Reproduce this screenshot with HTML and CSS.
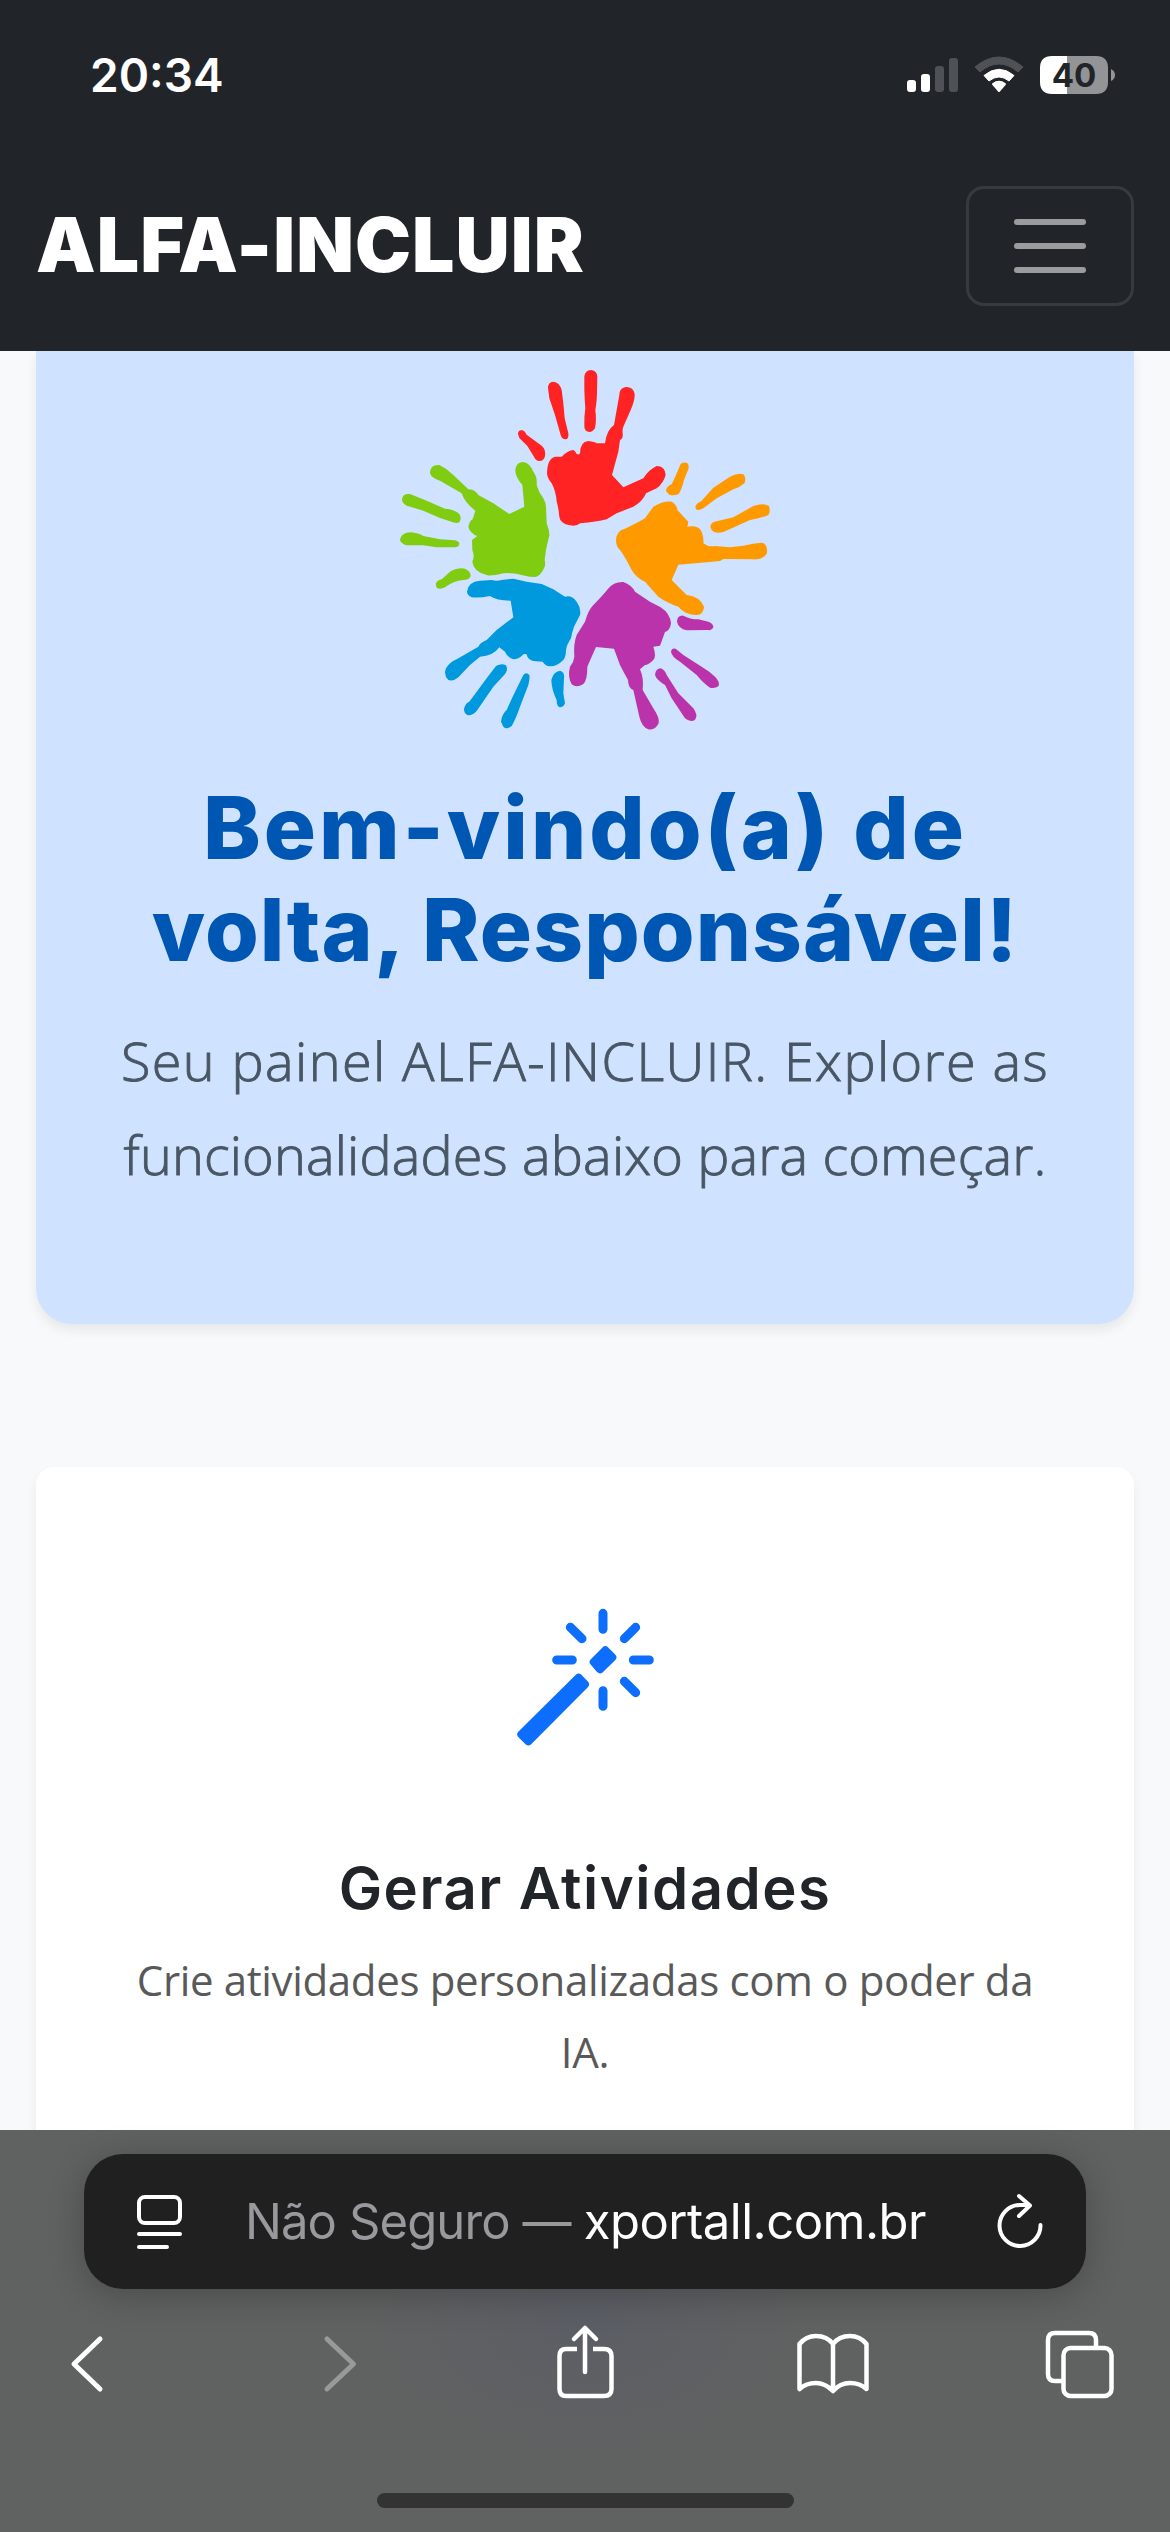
FILE: index.html
```html
<!DOCTYPE html>
<html lang="pt-BR">
<head>
<meta charset="utf-8">
<title>ALFA-INCLUIR</title>
<link rel="stylesheet" href="styles.css">
</head>
<body>
<div class="screen">
  <header class="top">
    <div class="status">
      <span class="time">20:34</span>
      <svg class="status-icons" width="212" height="44" viewBox="0 0 212 44">
        <rect x="1" y="27" width="9" height="12" rx="3" fill="#fff"/>
        <rect x="15" y="21" width="9" height="18" rx="3" fill="#fff"/>
        <rect x="29" y="13" width="9" height="26" rx="3" fill="#4e5156"/>
        <rect x="43" y="5" width="9" height="34" rx="3" fill="#4e5156"/>
        <path d="M69 14 Q93 -6 117 14 L112 19 Q93 3 74 19Z" fill="#4e5156" stroke="#4e5156" stroke-linejoin="round"/>
        <path d="M78 22.500 Q93 10 108 22.500 L103 28 Q93 20 83 28Z" fill="#fff" stroke="#fff" stroke-linejoin="round"/>
        <path d="M87 31 Q93 26.500 99 31 L93 38Z" fill="#fff" stroke="#fff" stroke-width="2" stroke-linejoin="round"/>
        <path d="M146 3H161V41H146Q134 41 134 29V15Q134 3 146 3Z" fill="#fff"/>
        <path d="M161 3H190Q202 3 202 15V29Q202 41 190 41H161Z" fill="#939495"/>
        <path d="M205 16Q209 18 209 22T205 28Z" fill="#939495"/>
        <text x="168" y="34" class="battery" text-anchor="middle">40</text>
      </svg>
    </div>
    <nav class="navbar">
      <a class="brand">ALFA-INCLUIR</a>
      <button class="toggler" aria-label="Menu"><i></i><i></i><i></i></button>
    </nav>
  </header>

  <main class="page">
    <section class="hero">
      <svg class="hands" width="390" height="380" viewBox="0 0 1170 1140">
        <g fill="#ff2323">
          <path d="M384 222Q384 208 398 211Q405 214 410 224L455 257Q468 268 465 288Q462 303 448 303Q438 303 432 290L412 258L388 234Z"/>
          <path d="M474 85Q474 65 490 65Q508 66 515 90L520 130L524 175L535 220Q537 238 526 238Q516 238 512 225L495 165L478 115Z"/>
          <path d="M583 50Q586 30 602 30Q620 30 622 50L621 100Q620 130 616 150Q620 180 615 205Q608 216 598 216Q584 214 583 200Q582 170 586 145Q584 120 583 90Z"/>
          <path d="M688 105Q688 84 707 81Q730 80 734 102Q735 120 722 150L700 200Q697 205 698 220Q700 235 690 240L685 275L666 345L700 382L760 355Q775 330 800 318Q825 318 827 345Q820 370 800 385L768 400Q758 425 730 440L680 460L650 478Q620 486 570 490Q560 500 540 496Q510 490 508 470Q505 440 500 425Q498 395 485 370Q472 355 471 340Q472 295 495 290Q510 290 515 290Q535 270 550 270Q555 272 560 282Q568 285 570 280Q570 245 595 243Q615 245 620 250L645 250Q650 210 672 195Q680 150 688 105Z"/>
        </g>
        <g fill="#80cc10">
          <path d="M120 340Q120 313 148 315Q170 325 190 345L235 388Q255 388 265 405L310 430L358 462L403 440L397 375Q375 350 376 328Q380 306 400 306Q420 310 430 335Q442 350 440 375Q445 395 460 415Q468 430 468 440L470 490Q478 510 478 525L468 570L464 600Q468 615 462 625Q450 650 435 651Q418 651 405 647Q370 637 340 640Q300 650 290 645Q250 635 247 605Q255 590 247 570L246 540L262 528Q240 520 235 500Q240 480 248 478L256 452Q225 430 215 400L150 362Q125 355 120 340Z"/>
          <path d="M36 418Q38 400 60 402L110 422L165 446Q195 448 208 462Q216 475 208 487Q200 492 180 484L150 474L100 452L50 437Q36 430 36 418Z"/>
          <path d="M30 538Q34 518 62 517Q85 519 100 528L150 538L195 541Q208 545 208 552Q206 562 195 562L140 562L100 556L50 556Q30 550 30 538Z"/>
          <path d="M137 672Q140 662 155 658L180 635Q205 622 225 626Q243 635 242 648Q238 660 220 660Q190 662 165 682Q150 690 140 683Z"/>
        </g>
        <g fill="#ff9900">
          <path d="M828 394Q828 380 845 373L858 345L872 312Q880 305 892 309Q898 315 896 325L882 360Q875 390 865 403Q850 408 838 404Z"/>
          <path d="M916 440Q918 430 935 422L970 383L1020 350Q1045 338 1060 343Q1070 355 1063 370Q1050 382 1030 388L980 415L940 445Q925 453 918 448Z"/>
          <path d="M961 500Q964 485 980 484L1030 472L1090 438Q1120 428 1137 438Q1142 455 1135 465Q1110 475 1080 480L1035 500L1000 516Q975 522 965 510Z"/>
          <path d="M678 540Q680 510 705 506Q740 490 765 475L790 440Q820 422 845 425Q862 435 862 450L895 485L892 500Q925 495 935 515Q942 535 940 550Q955 562 975 558L1020 562L1060 557Q1090 550 1115 548Q1130 550 1131 570L1131 580Q1120 600 1090 598L1000 597L990 603L950 607L865 614L845 660L890 705Q930 710 942 740Q940 765 920 765Q885 765 865 740Q830 728 805 710L765 665Q740 655 725 630Q705 590 690 570Q678 560 678 540Z"/>
        </g>
        <g fill="#0099dd">
          <path d="M231 695Q234 665 270 662L305 660Q320 665 335 660L370 656L410 665L455 672L490 688L525 710Q545 705 560 725Q574 745 570 765L552 800Q545 820 543 835Q530 855 528 870Q528 890 520 900Q500 920 480 919Q465 917 458 905L430 903Q412 898 410 883Q400 880 398 885Q385 898 370 898Q350 890 345 875L328 862Q310 888 270 890L240 915L205 952Q190 965 175 960Q160 945 168 925Q180 905 200 898L265 860Q270 848 290 840L320 810L370 772L362 722Q320 722 300 708Q270 714 245 712Q232 706 231 695Z"/>
          <path d="M222 1048Q225 1030 238 1025L290 955L318 918Q335 908 348 916Q355 930 345 942L310 980L262 1050Q250 1068 232 1065Q222 1060 222 1048Z"/>
          <path d="M333 1085Q336 1062 350 1050L368 1010L400 945Q408 935 418 945Q420 955 415 975L390 1040Q378 1075 365 1098Q350 1110 340 1100Z"/>
          <path d="M484 960Q490 935 510 932Q525 936 522 955L520 1000L525 1030Q520 1043 508 1042Q500 1038 500 1020Q485 990 484 960Z"/>
        </g>
        <g fill="#bb33aa">
          <path d="M653 688Q670 665 700 666Q725 675 735 695L780 725L812 742Q840 760 843 790Q840 812 825 816L810 857L790 860Q800 890 790 900Q775 915 765 915L750 928Q762 955 758 990L790 1045Q810 1075 806 1090Q795 1112 775 1108Q755 1100 748 1070L730 990Q715 985 714 960Q700 935 690 915L672 866L618 861Q605 890 592 920Q592 960 580 972Q560 985 545 973Q532 950 540 920Q552 905 553 890Q550 850 560 825L585 785Q595 750 610 735Q640 705 653 688Z"/>
          <path d="M861 785Q862 765 880 767Q900 778 925 778L955 785Q970 790 970 802Q965 813 955 810L890 811Q865 805 861 785Z"/>
          <path d="M843 875Q845 863 857 866L880 885L935 920Q960 935 975 950Q990 965 986 978Q975 987 960 983Q940 970 920 945L870 905Q845 890 843 875Z"/>
          <path d="M795 945Q797 925 812 925Q825 930 830 945L865 1000L910 1045Q925 1065 915 1080Q900 1088 885 1075L845 1015L825 975Q800 960 795 945Z"/>
        </g>
      </svg>
      <h1><span class="h-a">Bem-vindo(a) de</span><br><span class="h-b">volta, Responsável!</span></h1>
      <p><span class="p-a">Seu painel ALFA-INCLUIR. Explore as</span><br><span class="p-b">funcionalidades abaixo para começar.</span></p>
    </section>

    <section class="card">
      <svg class="wand" width="170" height="170" viewBox="0 0 510 510" fill="#0d6efd" stroke="#0d6efd" stroke-linecap="round" stroke-linejoin="round">
        <path fill="none" stroke-width="27" d="M309 70V118M309 302V349M170 210H217M400 210H448M211 112L246 146M407 112L373 146M373 274L407 308"/>
        <path stroke-width="24" d="M236 263L255 283L85 454L64 433Z"/>
        <path stroke-width="24" d="M316 181L337 202L300 238L281 216Z"/>
      </svg>
      <h2>Gerar Atividades</h2>
      <p>Crie atividades personalizadas com o poder da<br>IA.</p>
    </section>
  </main>

  <footer class="browser">
    <div class="address">
      <svg width="50" height="60" viewBox="0 0 50 60" fill="none" stroke="#fff" stroke-width="4" stroke-linecap="round">
        <rect x="5" y="5" width="41" height="26" rx="6"/><path d="M5 42H46M5 55H33"/>
      </svg>
      <span class="url"><span class="insecure">Não Seguro —</span> <span class="domain">xportall.com.br</span></span>
      <svg width="50" height="60" viewBox="0 0 50 60" fill="none" stroke="#fff" stroke-width="4" stroke-linecap="round" stroke-linejoin="round">
        <path d="M45.500 33A20.500 20.500 0 1 1 25 13H34M24 4L35 13.500L24 24"/>
      </svg>
    </div>
    <div class="tools">
      <svg width="80" height="90" viewBox="0 0 80 90" fill="none" stroke="#fff" stroke-width="5" stroke-linecap="round" stroke-linejoin="round"><path d="M50 20L24 45L50 70"/></svg>
      <svg width="80" height="90" viewBox="0 0 80 90" fill="none" stroke="#999" stroke-width="5" stroke-linecap="round" stroke-linejoin="round"><path d="M29 20L55.500 45L29 70"/></svg>
      <svg width="80" height="90" viewBox="0 0 80 90" fill="none" stroke="#fff" stroke-width="4.500" stroke-linejoin="round"><path d="M32 30H21Q14.500 30 14.500 37V70Q14.500 77 21 77H59Q66.500 77 66.500 70V37Q66.500 30 59 30H48"/><path stroke-linecap="round" d="M40 53V10M29 20L40 9L51 20"/></svg>
      <svg width="80" height="90" viewBox="0 0 80 90" fill="none" stroke="#fff" stroke-width="4.500" stroke-linecap="round" stroke-linejoin="round"><path d="M40 24V72Q32 64 23 64Q13 64 6.500 70V25Q13 17 23 17Q34 17 40 25Q46 17 57 17Q67 17 73.500 25V70Q67 64 57 64Q47 64 40 72"/></svg>
      <svg width="80" height="90" viewBox="0 0 80 90" fill="none" stroke="#fff" stroke-width="4.500"><path d="M22 62H15Q8 62 8 55V21Q8 14 15 14H49Q56 14 56 21V28"/><rect x="23.500" y="29" width="48" height="48" rx="7"/></svg>
    </div>
    <div class="home"></div>
  </footer>
</div>
</body>
</html>
```
FILE: styles.css
```css
* { box-sizing: border-box; }
body { margin: 0; background: #f8f9fb; }
.screen { width: 1170px; height: 2532px; display: flex; flex-direction: column; overflow: hidden; font-family: "Open Sans", sans-serif; }
h1, h2, p { margin: 0; }
span { white-space: nowrap; }

.top { height: 351px; flex: none; background: #212529; position: relative; z-index: 2; }
.status { height: 150px; display: flex; justify-content: space-between; align-items: center; padding: 0 52px 0 90px; font-family: Inter, sans-serif; color: #fff; }
.time { font-size: 46px; font-weight: 600; line-height: 60px; }
.battery { font: 700 33px Inter, sans-serif; fill: #212529; }
.navbar { display: flex; justify-content: space-between; align-items: center; height: 192px; padding: 0 36px; }
.brand { font: 900 75px/100px Inter, sans-serif; color: #fff; letter-spacing: 1.100px; padding-bottom: 3px; }
.toggler { width: 168px; height: 120px; border: 3px solid #373b3e; border-radius: 18px; background: none; padding: 0; display: flex; flex-direction: column; gap: 18px; align-items: center; justify-content: center; }
.toggler i { width: 72px; height: 6px; border-radius: 3px; background: #9a9c9e; }

.page { flex: none; height: 1779px; overflow: hidden; padding: 0 36px; display: flex; flex-direction: column; gap: 143px; }
.hero { height: 973px; flex: none; background: #cfe2ff; border-radius: 0 0 36px 36px; box-shadow: 0 6px 12px rgba(0,0,0,.075); display: flex; flex-direction: column; align-items: center; padding-top: 9px; text-align: center; }
.hero h1 { font: 800 87px/102px Inter, sans-serif; color: #0056b3; margin-top: 37px; }
.h-a { letter-spacing: 3px; }
.h-b { letter-spacing: 1.100px; }
.hero p { font-size: 54px; line-height: 93.500px; color: #495663; margin-top: 33px; font-weight: 300; -webkit-text-stroke: .9px #495663; }
.p-a { letter-spacing: 1.400px; }
.p-b { letter-spacing: .15px; }
.card { height: 900px; flex: none; background: #fff; border-radius: 18px; box-shadow: 0 6px 12px rgba(0,0,0,.06); display: flex; flex-direction: column; align-items: center; text-align: center; padding-top: 123px; }
.card h2 { font: 600 58px/66px Inter, sans-serif; color: #212529; margin-top: 95px; letter-spacing: 1.500px; }
.card p { font-size: 42px; line-height: 72px; color: #595959; margin-top: 23px; letter-spacing: -.35px; }

.browser { height: 402px; flex: none; background: radial-gradient(ellipse 210px 130px at 50% 48%, #5b5e65, #606161 100%); display: flex; flex-direction: column; align-items: center; padding-top: 24px; position: relative; z-index: 2; }
.address { width: 1002px; height: 135px; border-radius: 39px; background: #202020; box-shadow: 0 6px 36px rgba(0,0,0,.24); display: flex; align-items: center; justify-content: space-between; padding: 0 41px 0 50px; }
.url { font: 400 49px/60px Inter, sans-serif; color: #fff; letter-spacing: -.7px; margin-right: 8px; }
.insecure { color: #98989d; letter-spacing: -.9px; }
.domain { letter-spacing: -.5px; }
.tools { width: 1070px; height: 90px; margin-top: 30px; display: flex; justify-content: space-between; }
.home { width: 417px; height: 15px; border-radius: 8px; background: #333; margin-top: 84px; }
```
